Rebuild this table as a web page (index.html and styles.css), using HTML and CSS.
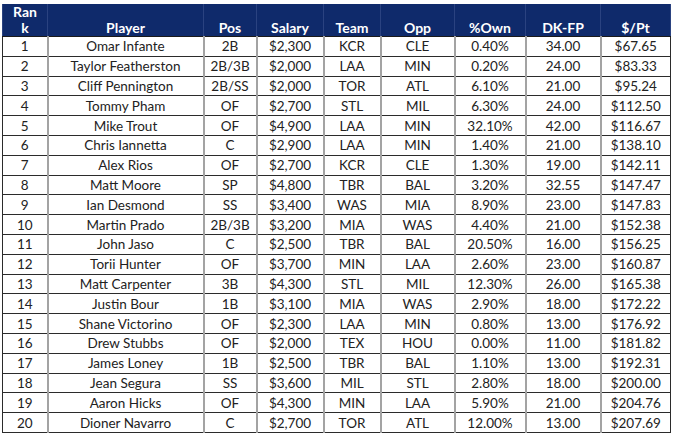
FILE: index.html
```html
<!DOCTYPE html>
<html>
<head>
<meta charset="utf-8">
<link rel="stylesheet" href="styles.css">
</head>
<body>
<table class="grid">
  <colgroup>
    <col class="c-rank"><col class="c-player"><col class="c-pos"><col class="c-salary"><col class="c-team"><col class="c-opp"><col class="c-own"><col class="c-dk"><col class="c-pt">
  </colgroup>
  <thead>
    <tr><th class="rank">Ran k</th><th>Player</th><th>Pos</th><th>Salary</th><th>Team</th><th>Opp</th><th>%Own</th><th>DK-FP</th><th>$/Pt</th></tr>
  </thead>
  <tbody>
    <tr><td>1</td><td>Omar Infante</td><td>2B</td><td>$2,300</td><td>KCR</td><td>CLE</td><td>0.40%</td><td>34.00</td><td>$67.65</td></tr>
    <tr><td>2</td><td>Taylor Featherston</td><td>2B/3B</td><td>$2,000</td><td>LAA</td><td>MIN</td><td>0.20%</td><td>24.00</td><td>$83.33</td></tr>
    <tr><td>3</td><td>Cliff Pennington</td><td>2B/SS</td><td>$2,000</td><td>TOR</td><td>ATL</td><td>6.10%</td><td>21.00</td><td>$95.24</td></tr>
    <tr><td>4</td><td>Tommy Pham</td><td>OF</td><td>$2,700</td><td>STL</td><td>MIL</td><td>6.30%</td><td>24.00</td><td>$112.50</td></tr>
    <tr><td>5</td><td>Mike Trout</td><td>OF</td><td>$4,900</td><td>LAA</td><td>MIN</td><td>32.10%</td><td>42.00</td><td>$116.67</td></tr>
    <tr><td>6</td><td>Chris Iannetta</td><td>C</td><td>$2,900</td><td>LAA</td><td>MIN</td><td>1.40%</td><td>21.00</td><td>$138.10</td></tr>
    <tr><td>7</td><td>Alex Rios</td><td>OF</td><td>$2,700</td><td>KCR</td><td>CLE</td><td>1.30%</td><td>19.00</td><td>$142.11</td></tr>
    <tr><td>8</td><td>Matt Moore</td><td>SP</td><td>$4,800</td><td>TBR</td><td>BAL</td><td>3.20%</td><td>32.55</td><td>$147.47</td></tr>
    <tr><td>9</td><td>Ian Desmond</td><td>SS</td><td>$3,400</td><td>WAS</td><td>MIA</td><td>8.90%</td><td>23.00</td><td>$147.83</td></tr>
    <tr><td>10</td><td>Martin Prado</td><td>2B/3B</td><td>$3,200</td><td>MIA</td><td>WAS</td><td>4.40%</td><td>21.00</td><td>$152.38</td></tr>
    <tr><td>11</td><td>John Jaso</td><td>C</td><td>$2,500</td><td>TBR</td><td>BAL</td><td>20.50%</td><td>16.00</td><td>$156.25</td></tr>
    <tr><td>12</td><td>Torii Hunter</td><td>OF</td><td>$3,700</td><td>MIN</td><td>LAA</td><td>2.60%</td><td>23.00</td><td>$160.87</td></tr>
    <tr><td>13</td><td>Matt Carpenter</td><td>3B</td><td>$4,300</td><td>STL</td><td>MIL</td><td>12.30%</td><td>26.00</td><td>$165.38</td></tr>
    <tr><td>14</td><td>Justin Bour</td><td>1B</td><td>$3,100</td><td>MIA</td><td>WAS</td><td>2.90%</td><td>18.00</td><td>$172.22</td></tr>
    <tr><td>15</td><td>Shane Victorino</td><td>OF</td><td>$2,300</td><td>LAA</td><td>MIN</td><td>0.80%</td><td>13.00</td><td>$176.92</td></tr>
    <tr><td>16</td><td>Drew Stubbs</td><td>OF</td><td>$2,000</td><td>TEX</td><td>HOU</td><td>0.00%</td><td>11.00</td><td>$181.82</td></tr>
    <tr><td>17</td><td>James Loney</td><td>1B</td><td>$2,500</td><td>TBR</td><td>BAL</td><td>1.10%</td><td>13.00</td><td>$192.31</td></tr>
    <tr><td>18</td><td>Jean Segura</td><td>SS</td><td>$3,600</td><td>MIL</td><td>STL</td><td>2.80%</td><td>18.00</td><td>$200.00</td></tr>
    <tr><td>19</td><td>Aaron Hicks</td><td>OF</td><td>$4,300</td><td>MIN</td><td>LAA</td><td>5.90%</td><td>21.00</td><td>$204.76</td></tr>
    <tr><td>20</td><td>Dioner Navarro</td><td>C</td><td>$2,700</td><td>TOR</td><td>ATL</td><td>12.00%</td><td>13.00</td><td>$207.69</td></tr>
  </tbody>
</table>
</body>
</html>
```
FILE: styles.css
```css
html, body {
  margin: 0;
  padding: 0;
  background: #ffffff;
}
body {
  padding: 4px 0 0 2px;
  font-family: Lato, "Open Sans", sans-serif;
  font-size: 13.5px;
  color: #222222;
}
.grid {
  border-collapse: collapse;
  table-layout: fixed;
  width: 668px;
  box-shadow: 0 2px 0 #c8c8c8;
}
.c-rank { width: 45px; }
.c-player { width: 156px; }
.c-pos { width: 53px; }
.c-salary { width: 67px; }
.c-team { width: 57px; }
.c-opp { width: 74px; }
.c-own { width: 71px; }
.c-dk { width: 75px; }
.c-pt { width: 70px; }
.grid th {
  background: #0f2a6b;
  color: #ffffff;
  font-weight: 700;
  font-size: 14px;
  height: 32px;
  padding: 0;
  vertical-align: bottom;
  text-align: center;
  line-height: 17px;
  border-left: 1px solid #2a4280;
  border-right: 1px solid #2a4280;
  border-bottom: 1px solid #1a1a1a;
}
.grid th.rank {
  padding: 0 8px;
  line-height: 16px;
  word-break: break-all;
}
.grid td {
  height: 18.8px;
  padding: 0;
  text-align: center;
  line-height: 18px;
  white-space: nowrap;
  border-top: 1px solid #2b2b2b;
  border-bottom: 1px solid #2b2b2b;
  border-left: 2px solid #a3a3a3;
  border-right: 2px solid #a3a3a3;
}
.grid td:first-child {
  border-left: 1px solid #2b2b2b;
}
.grid td:last-child {
  border-right: 1px solid #2b2b2b;
}
```
